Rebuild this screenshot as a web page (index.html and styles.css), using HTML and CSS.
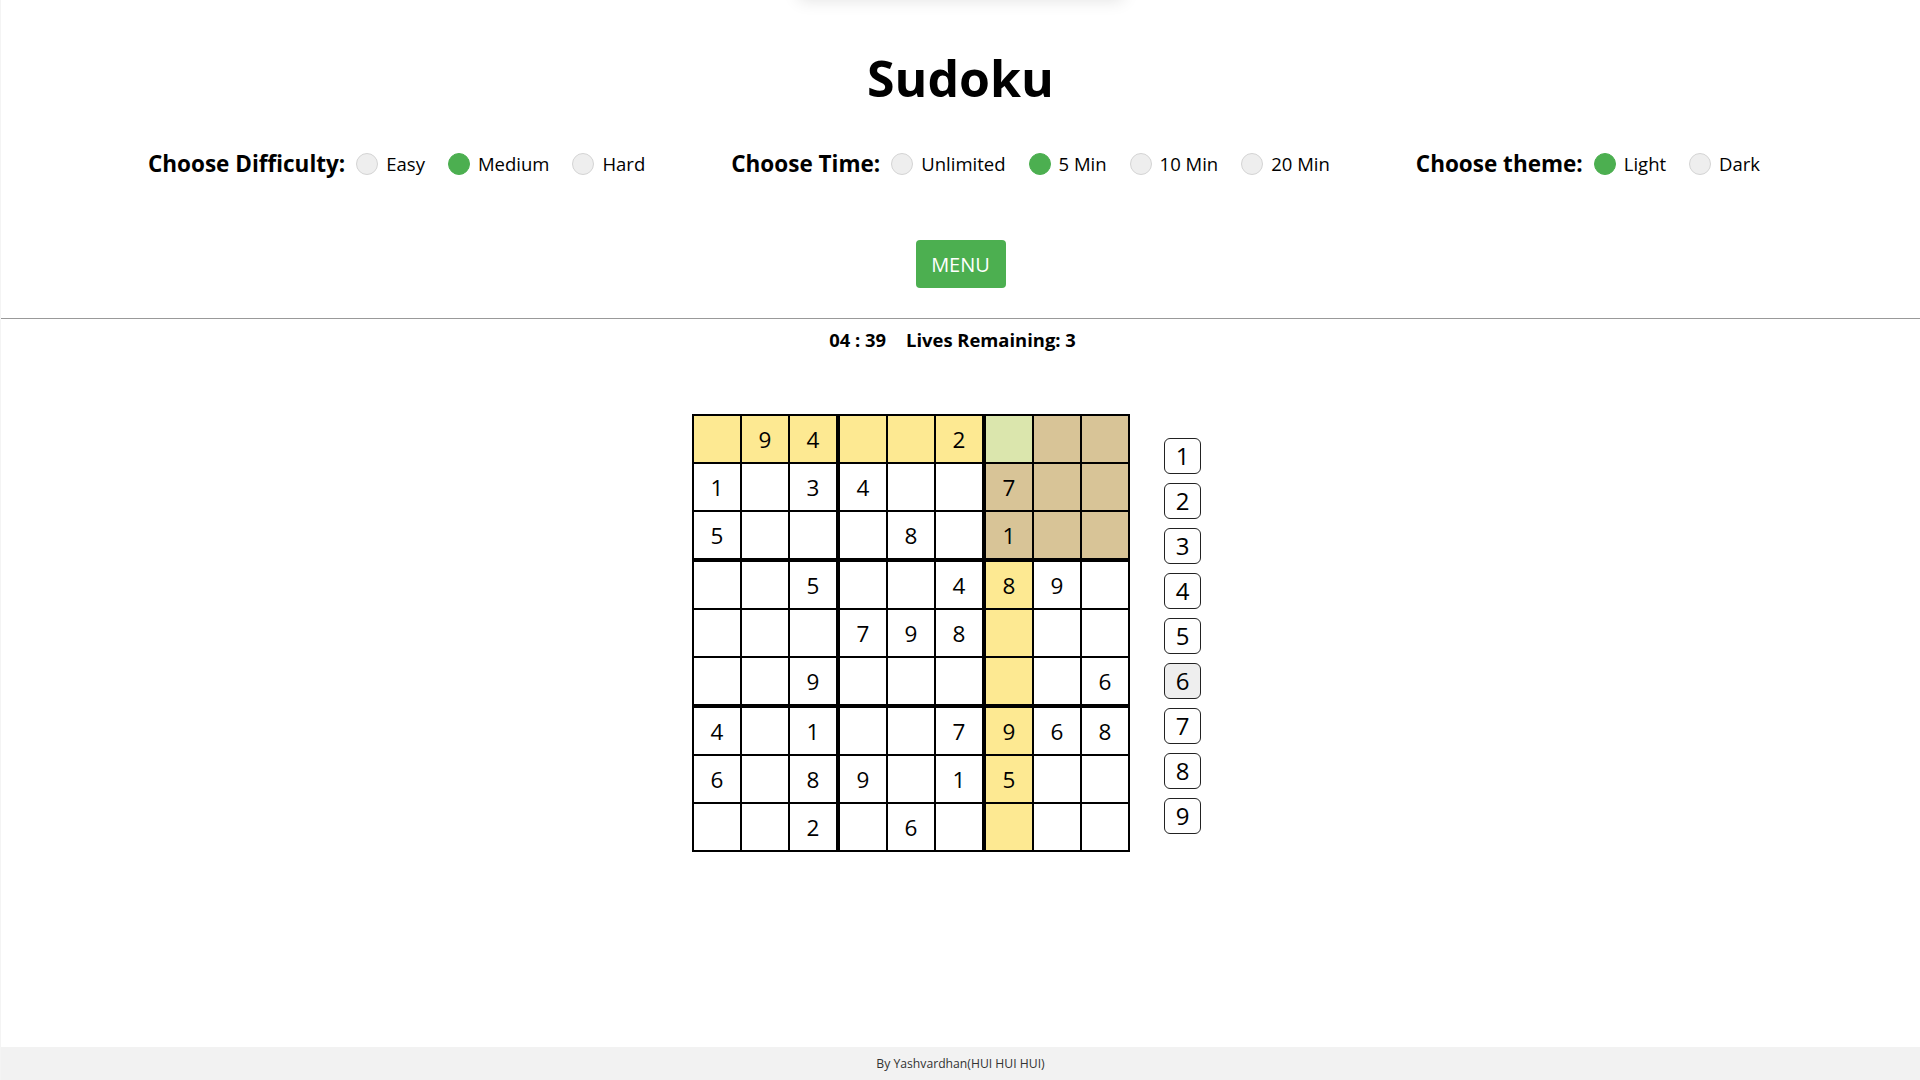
FILE: index.html
```html
<!DOCTYPE html>
<html lang="en">
<head>
<meta charset="utf-8">
<title>Sudoku</title>
<link rel="stylesheet" href="styles.css">
</head>
<body>
<div class="toast"></div>
<header class="top">
  <h1 class="title">Sudoku</h1>
  <div class="settings">
    <div class="group">
      <span class="group-label">Choose Difficulty:</span>
      <label class="opt"><span class="radio"></span>Easy</label>
      <label class="opt"><span class="radio on"></span>Medium</label>
      <label class="opt"><span class="radio"></span>Hard</label>
    </div>
    <div class="group">
      <span class="group-label">Choose Time:</span>
      <label class="opt"><span class="radio"></span>Unlimited</label>
      <label class="opt"><span class="radio on"></span>5 Min</label>
      <label class="opt"><span class="radio"></span>10 Min</label>
      <label class="opt"><span class="radio"></span>20 Min</label>
    </div>
    <div class="group">
      <span class="group-label">Choose theme:</span>
      <label class="opt"><span class="radio on"></span>Light</label>
      <label class="opt"><span class="radio"></span>Dark</label>
    </div>
  </div>
  <button class="menu-btn">MENU</button>
</header>
<div class="divider"></div>
<div class="status"><span class="timer">04 : 39</span><span class="lives">Lives Remaining: 3</span></div>
<main class="game">
  <div class="board">
    <div class="c hl"></div><div class="c hl">9</div><div class="c hl tr">4</div><div class="c hl"></div><div class="c hl"></div><div class="c hl tr">2</div><div class="c sel"></div><div class="c box"></div><div class="c box"></div>
    <div class="c">1</div><div class="c"></div><div class="c tr">3</div><div class="c">4</div><div class="c"></div><div class="c tr"></div><div class="c box">7</div><div class="c box"></div><div class="c box"></div>
    <div class="c tb">5</div><div class="c tb"></div><div class="c tb tr"></div><div class="c tb"></div><div class="c tb">8</div><div class="c tb tr"></div><div class="c tb box">1</div><div class="c tb box"></div><div class="c tb box"></div>
    <div class="c"></div><div class="c"></div><div class="c tr">5</div><div class="c"></div><div class="c"></div><div class="c tr">4</div><div class="c hl">8</div><div class="c">9</div><div class="c"></div>
    <div class="c"></div><div class="c"></div><div class="c tr"></div><div class="c">7</div><div class="c">9</div><div class="c tr">8</div><div class="c hl"></div><div class="c"></div><div class="c"></div>
    <div class="c tb"></div><div class="c tb"></div><div class="c tb tr">9</div><div class="c tb"></div><div class="c tb"></div><div class="c tb tr"></div><div class="c tb hl"></div><div class="c tb"></div><div class="c tb">6</div>
    <div class="c">4</div><div class="c"></div><div class="c tr">1</div><div class="c"></div><div class="c"></div><div class="c tr">7</div><div class="c hl">9</div><div class="c">6</div><div class="c">8</div>
    <div class="c">6</div><div class="c"></div><div class="c tr">8</div><div class="c">9</div><div class="c"></div><div class="c tr">1</div><div class="c hl">5</div><div class="c"></div><div class="c"></div>
    <div class="c"></div><div class="c"></div><div class="c tr">2</div><div class="c"></div><div class="c">6</div><div class="c tr"></div><div class="c hl"></div><div class="c"></div><div class="c"></div>
  </div>
  <div class="numpad">
    <button class="num">1</button>
    <button class="num">2</button>
    <button class="num">3</button>
    <button class="num">4</button>
    <button class="num">5</button>
    <button class="num active">6</button>
    <button class="num">7</button>
    <button class="num">8</button>
    <button class="num">9</button>
  </div>
</main>
<footer class="footer">By Yashvardhan(HUI HUI HUI)</footer>
</body>
</html>
```
FILE: styles.css
```css
html, body {
  margin: 0;
  padding: 0;
}
body {
  font-family: "Open Sans", "DejaVu Sans", sans-serif;
  color: #000;
  background: #fff;
  min-height: 100vh;
  display: flex;
  flex-direction: column;
  position: relative;
  overflow: hidden;
  border-left: 1px solid #f4f4f4;
  box-sizing: border-box;
}
.toast {
  position: absolute;
  top: -60px;
  left: 50%;
  transform: translateX(-50%);
  width: 324px;
  height: 60px;
  background: #fff;
  box-shadow: 0 0 16px rgba(0, 0, 0, 0.12);
}
.top {
  display: flex;
  flex-direction: column;
  align-items: center;
  padding-top: 48px;
}
.title {
  margin: 0;
  font-size: 50px;
  line-height: 60px;
  font-weight: 700;
}
.settings {
  margin-top: 41px;
  height: 30px;
  display: flex;
  justify-content: center;
  align-items: center;
  gap: 86px;
  padding-right: 13px;
  align-self: stretch;
}
.group {
  display: flex;
  align-items: center;
}
.group-label {
  font-weight: 700;
  font-size: 22.5px;
  line-height: 30px;
  margin-right: 11px;
}
.opt {
  display: flex;
  align-items: center;
  font-size: 18.5px;
  line-height: 30px;
  margin-right: 23px;
}
.opt:last-child {
  margin-right: 0;
}
.radio {
  width: 20px;
  height: 20px;
  border-radius: 50%;
  background: #eee;
  border: 1px solid #d4d4d4;
  margin-right: 8px;
}
.radio.on {
  background: #4caf50;
  border-color: #4caf50;
}
.menu-btn {
  margin-top: 61px;
  width: 90px;
  height: 48px;
  border: none;
  border-radius: 4px;
  background: #4caf50;
  color: #fff;
  font-family: "Open Sans", sans-serif;
  font-weight: 500;
  font-size: 20px;
  padding: 0;
}
.divider {
  margin-top: 30px;
  height: 1px;
  background: #999;
}
.status {
  margin-top: 9px;
  display: flex;
  justify-content: center;
  gap: 20px;
  font-weight: 700;
  font-size: 18.4px;
  line-height: 24px;
  padding-right: 16px;
}
.game {
  margin-top: 62px;
  display: flex;
  justify-content: center;
  align-items: center;
  gap: 34px;
}
.board {
  display: grid;
  grid-template-columns: repeat(9, max-content);
  border: 1px solid #000;
}
.c {
  width: 46px;
  border: 1px solid #000;
  display: flex;
  align-items: center;
  justify-content: center;
  font-size: 22.5px;
  padding-top: 1px;
  box-sizing: content-box;
  height: 45px;
}
.c.tr {
  border-right-width: 3px;
}
.c.tb {
  border-bottom-width: 3px;
}
.c.hl {
  background: #fde992;
}
.c.box {
  background: #d8c497;
}
.c.sel {
  background: #dbe6ad;
}
.numpad {
  display: flex;
  flex-direction: column;
  gap: 9px;
  margin-right: 28px;
  margin-top: 5px;
}
.num {
  width: 37px;
  height: 36px;
  border: 1px solid #222;
  border-radius: 6px;
  background: #fff;
  font-family: "Open Sans", sans-serif;
  font-size: 24px;
  line-height: 34px;
  padding: 0;
  color: #000;
}
.num.active {
  background: #eee;
}
.footer {
  margin-top: auto;
  background: #f2f2f2;
  height: 33px;
  line-height: 33px;
  text-align: center;
  font-size: 12.2px;
  color: #333;
}
```
